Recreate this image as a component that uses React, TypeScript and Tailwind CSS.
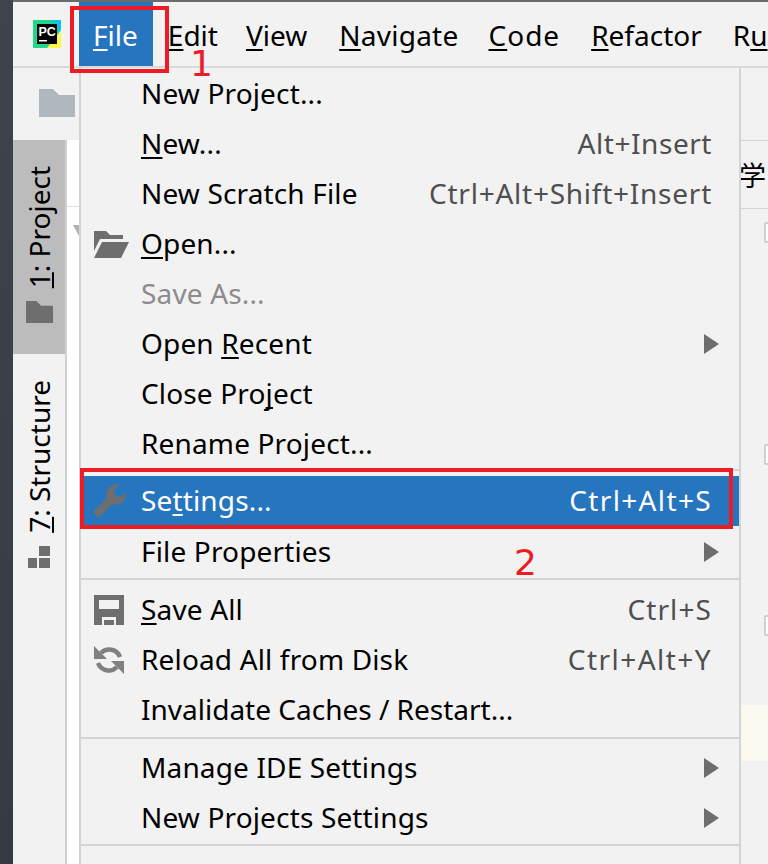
import React from 'react';

const u = (ch: string) => (
  <span className="underline decoration-2 underline-offset-[3px] [text-decoration-skip-ink:none]">{ch}</span>
);

const uv = (ch: string) => (
  <span className="underline decoration-2 underline-offset-[-2px] [text-decoration-skip-ink:none]">{ch}</span>
);

const OpenFolderIcon = () => (
  <svg className="ml-[1px]" width="35" height="27" viewBox="0 0 35 27" fill="#6e6e6e">
    <path d="M0 0H12L16 4H29V8H6L0 20Z" />
    <path d="M8 11H35L27 27H0Z" />
  </svg>
);

const WrenchIcon = () => (
  <svg className="ml-[-1px]" width="36" height="36" viewBox="0 0 36 36" fill="#6e6e6e">
    <path d="M28 1.5C22 0 15 4 14 11C14 13 14.5 14 15 15L1 29L6.5 35L20.5 21C22 21.5 24 22 26 21.5C31 20.5 34.5 15 34 9L28 14.5L22 11L22 7Z" />
  </svg>
);

const SaveIcon = () => (
  <svg className="ml-[1px]" width="30" height="30" viewBox="0 0 30 30">
    <rect width="30" height="30" fill="#6e6e6e" />
    <rect x="5" y="5" width="20" height="9" fill="#f2f2f2" />
    <rect x="8" y="22" width="14" height="8" fill="#f2f2f2" />
    <rect x="10" y="25" width="10" height="5" fill="#6e6e6e" />
  </svg>
);

const ReloadIcon = () => (
  <svg className="ml-[1px]" width="30" height="30" viewBox="0 0 30 30">
    <g fill="none" stroke="#808080" strokeWidth="4.5">
      <path d="M26 12A11.5 11.5 0 0 0 7 8" />
      <path d="M4 18A11.5 11.5 0 0 0 23 22" />
    </g>
    <path d="M0 1V14H13Z" fill="#808080" />
    <path d="M30 29V16H17Z" fill="#808080" />
  </svg>
);

const PcLogo = () => (
  <svg width="28" height="28" viewBox="0 0 28 28">
    <defs>
      <linearGradient id="pc" x1="0" y1="0.6" x2="1" y2="0.4">
        <stop offset="0" stopColor="#21d789" />
        <stop offset="0.55" stopColor="#21d789" />
        <stop offset="1" stopColor="#07c3f2" />
      </linearGradient>
    </defs>
    <rect width="28" height="28" fill="url(#pc)" />
    <path d="M14 28L28 10V28Z" fill="#fcf84a" />
    <rect x="4" y="4" width="20" height="20" fill="#000" />
    <text x="5.5" y="15.5" fontSize="12.5" fontWeight="700" fill="#fff" fontFamily="'Liberation Sans', sans-serif">PC</text>
    <rect x="6" y="20" width="8" height="1.5" fill="#fff" />
  </svg>
);

const Arrow = () => (
  <svg width="15" height="20" viewBox="0 0 15 20" fill="#6e6e6e">
    <path d="M0 0L15 10L0 20Z" />
  </svg>
);

const Folder = ({ w, h, color }: { w: number; h: number; color: string }) => (
  <svg width={w} height={h} viewBox="0 0 36 28" preserveAspectRatio="none" fill={color}>
    <path d="M0 0H14L20 6H36V28H0Z" />
  </svg>
);

type RowProps = {
  label: React.ReactNode;
  icon?: React.ReactNode;
  shortcut?: string;
  keyCls?: string;
  arrow?: boolean;
  disabled?: boolean;
  active?: boolean;
};

const Row = ({ label, icon, shortcut, keyCls = 'tracking-[0.75px]', arrow, disabled, active }: RowProps) => (
  <div className={`flex h-[50px] items-center ${active ? 'bg-[#2675bf] text-white' : disabled ? 'text-[#8c8c8c]' : 'text-black'}`}>
    <div className="flex w-[60px] shrink-0 justify-end pr-[12px]">
      <div className="flex w-[36px] justify-start">{icon}</div>
    </div>
    <span className="flex-1 whitespace-nowrap pb-[2px] tracking-[0.15px]">{label}</span>
    {shortcut && (
      <span className={`mr-[27px] whitespace-nowrap pb-[2px] ${keyCls} ${active ? 'text-white' : 'text-[#4f4f4f]'}`}>{shortcut}</span>
    )}
    {arrow && (
      <span className="mr-[20px] flex">
        <Arrow />
      </span>
    )}
  </div>
);

const Sep = ({ h, top }: { h: string; top: string }) => (
  <div className={`${h} ${top}`}>
    <div className="h-[2px] bg-[#d4d4d4]" />
  </div>
);

const menuBar = [
  { key: 'File', node: <>{u('F')}ile</>, cls: 'pl-[14px] pr-[15px] bg-[#2675bf] text-white' },
  { key: 'Edit', node: <>{u('E')}dit</>, cls: 'pl-[15px] pr-[13px]' },
  { key: 'View', node: <>{u('V')}iew</>, cls: 'pl-[15px] pr-[17px]' },
  { key: 'Navigate', node: <>{u('N')}avigate</>, cls: 'pl-[15px] pr-[15px] tracking-[0.25px]' },
  { key: 'Code', node: <>{u('C')}ode</>, cls: 'pl-[15px] pr-[16px] tracking-[1px]' },
  { key: 'Refactor', node: <>{u('R')}efactor</>, cls: 'pl-[15px] pr-[16px]' },
  { key: 'Run', node: <>R{u('u')}n</>, cls: 'pl-[15px] pr-[15px]' },
];

export default function App() {
  return (
    <div className="relative flex h-[864px] w-[768px] overflow-hidden bg-[#f2f2f2] font-['Noto_Sans','Open_Sans',sans-serif] text-[28px] leading-none text-black">
      {/* window edge */}
      <div className="w-[13px] shrink-0 bg-gradient-to-b from-[#3f444c] to-[#363a42]" />

      <div className="flex min-w-0 flex-1 flex-col">
        <div className="h-[2px] shrink-0 bg-[#6b6b6b]" />

        {/* menu bar */}
        <div className="flex h-[66px] shrink-0 items-stretch overflow-hidden border-b-2 border-[#d9d9d9]">
          <div className="flex w-[66px] shrink-0 items-center pl-[20px]">
            <PcLogo />
          </div>
          {menuBar.map((m) => (
            <div key={m.key} className={`flex items-center whitespace-nowrap pt-[2px] ${m.cls}`}>
              <span>{m.node}</span>
            </div>
          ))}
        </div>

        <div className="flex min-h-0 flex-1">
          {/* left tool window strip */}
          <div className="flex w-[66px] shrink-0 flex-col">
            <div className="flex h-[72px] shrink-0 items-start pl-[26px] pt-[21px]">
              <Folder w={36} h={28} color="#afb8bd" />
            </div>
            <div className="flex min-h-0 flex-1">
              <div className="flex w-[54px] shrink-0 flex-col border-r-2 border-[#d0d0d0]">
                <div className="flex h-[214px] shrink-0 flex-col items-center bg-[#bcbcbc] pt-[26px]">
                  <span className="rotate-180 whitespace-nowrap [writing-mode:vertical-rl]">{uv('1')}: Project</span>
                  <div className="mt-[13px]">
                    <Folder w={27} h={22} color="#6e6e6e" />
                  </div>
                </div>
                <div className="flex flex-col items-center pt-[26px]">
                  <span className="rotate-180 whitespace-nowrap [writing-mode:vertical-rl]">{uv('7')}: Structure</span>
                  <div className="mt-[13px]">
                    <svg width="22" height="22" viewBox="0 0 22 22" fill="#6e6e6e">
                      <rect x="0" y="12" width="9" height="10" />
                      <rect x="11" y="12" width="11" height="10" />
                      <rect x="11" y="0" width="11" height="10" />
                    </svg>
                  </div>
                </div>
              </div>
              <div className="flex-1 bg-white">
                <div className="h-[67px] border-b-[1.5px] border-[#e0e0e0]" />
                <svg className="ml-[6px] mt-[18px]" width="6" height="11" viewBox="0 0 6 11" fill="#b0b0b0">
                  <path d="M0 0H6V11Z" />
                </svg>
              </div>
            </div>
          </div>

          {/* File menu */}
          <div className="flex w-[662px] shrink-0 flex-col border-x-2 border-[#d4d4d4] bg-[#f2f2f2]">
            <div className="h-[1px] shrink-0" />
            <Row label="New Project..." />
            <Row label={<>{u('N')}ew...</>} shortcut="Alt+Insert" keyCls="tracking-[0.55px]" />
            <Row label="New Scratch File" shortcut="Ctrl+Alt+Shift+Insert" />
            <Row label={<>{u('O')}pen...</>} icon={<OpenFolderIcon />} />
            <Row label="Save As..." disabled />
            <Row label={<>Open {u('R')}ecent</>} arrow />
            <Row label={<>Close Pro{u('j')}ect</>} />
            <Row label="Rename Project..." />
            <Sep h="h-[7px]" top="" />
            <Row label={<>Se{u('t')}tings...</>} icon={<WrenchIcon />} shortcut="Ctrl+Alt+S" keyCls="tracking-[1.35px]" active />
            <div className="h-[1px] shrink-0" />
            <Row label="File Properties" arrow />
            <Sep h="h-[8px]" top="pt-[1px]" />
            <Row label={<>{u('S')}ave All</>} icon={<SaveIcon />} shortcut="Ctrl+S" keyCls="tracking-[1.1px]" />
            <Row label="Reload All from Disk" icon={<ReloadIcon />} shortcut="Ctrl+Alt+Y" keyCls="tracking-[1.45px]" />
            <Row label={<span className="tracking-[0px]">Invalidate Caches / Restart...</span>} />
            <Sep h="h-[8px]" top="pt-[2px]" />
            <Row label="Manage IDE Settings" arrow />
            <Row label="New Projects Settings" arrow />
            <Sep h="h-[8px]" top="pt-[1px]" />
          </div>

          {/* editor behind the menu */}
          <div className="flex min-w-0 flex-1 flex-col overflow-hidden">
            <div className="h-[73px] shrink-0 border-b border-[#d4d4d4]" />
            <div className="ml-[-2px] flex h-[68px] shrink-0 items-center border-b border-[#d4d4d4] font-['Noto_Sans_CJK_SC',sans-serif] text-[27px]">
              <span>学</span>
            </div>
            <div className="ml-[23px] mt-[13px] h-[21px] w-[10px] shrink-0 rounded-[2px] border-2 border-[#d0d0d0] bg-white" />
            <div className="ml-[23px] mt-[201px] h-[21px] w-[10px] shrink-0 rounded-[2px] border-2 border-[#d0d0d0] bg-white" />
            <div className="ml-[23px] mt-[150px] h-[21px] w-[10px] shrink-0 rounded-[2px] border-2 border-[#d0d0d0] bg-white" />
            <div className="mt-[69px] h-[56px] shrink-0 bg-[#fcf9f0]" />
          </div>
        </div>
      </div>

      {/* red annotations */}
      <div className="absolute left-[70px] top-[6px] h-[67px] w-[99px] border-4 border-[#ed1c24]" />
      <div className="absolute left-[80px] top-[468px] h-[61px] w-[653px] border-4 border-[#ed1c24]" />
      <span className="absolute left-[190px] top-[46px] font-['DejaVu_Sans',sans-serif] text-[36px] leading-none text-[#ed1c24]">1</span>
      <span className="absolute left-[514px] top-[545px] font-['DejaVu_Sans',sans-serif] text-[36px] leading-none text-[#ed1c24]">2</span>
    </div>
  );
}
